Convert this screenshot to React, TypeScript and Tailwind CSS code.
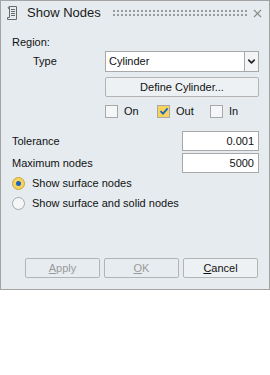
import { ChevronDown, X } from 'lucide-react';

function Check({ checked, label }: { checked?: boolean; label: string }) {
  return (
    <div className="flex items-center gap-[6px]">
      <div
        className={
          'w-[13px] h-[13px] border flex items-center justify-center ' +
          (checked ? 'border-[#a8a8a8] bg-[#f6d45c]' : 'border-[#a8a8a8] bg-[#f4f6f8]')
        }
      >
        {checked && (
          <svg width="10" height="10" viewBox="0 0 10 10">
            <path d="M1.5 5.2 L4 7.6 L8.6 2.4" fill="none" stroke="#1d63c4" strokeWidth="1.8" />
          </svg>
        )}
      </div>
      <span>{label}</span>
    </div>
  );
}

function Radio({ checked, label }: { checked?: boolean; label: string }) {
  return (
    <div className="flex items-center gap-[7px] h-[20px]">
      <div
        className={
          'w-[13px] h-[13px] rounded-full border flex items-center justify-center ' +
          (checked ? 'border-[#c9a63a] bg-[#f6d45c]' : 'border-[#a8a8a8] bg-[#f4f6f8]')
        }
      >
        {checked && <div className="w-[5px] h-[5px] rounded-full bg-[#1d63c4]" />}
      </div>
      <span>{label}</span>
    </div>
  );
}

function Btn({ u, rest, disabled }: { u: string; rest: string; disabled?: boolean }) {
  return (
    <div
      className={
        'w-[75px] h-[20px] border border-[#b4b4b4] rounded-[2px] flex items-center justify-center ' +
        (disabled ? 'text-[#9a9a9a] bg-[#e6ecf0]' : 'text-[#111] bg-[#edf1f4]')
      }
    >
      <span>
        <span className="underline">{u}</span>
        {rest}
      </span>
    </div>
  );
}

export default function App() {
  return (
    <div className="w-[270px] h-[375px] bg-white" style={{ fontFamily: '"Liberation Sans", Arial, sans-serif' }}>
      <div className="w-[270px] h-[290px] bg-[#e5ebef] border border-[#a3a3a3] flex flex-col text-[11px] text-[#111]">
        {/* title bar */}
        <div className="flex items-center h-[24px] pl-[5px] pr-[5px]">
          <svg width="12" height="16" viewBox="0 0 12 16" className="shrink-0">
            <path
              d="M3.5 1.5 H10.5 V14.5 H1.5 V12.5 H3.5 Z M3.5 1.5 C1.8 1.5 1.8 4 3.5 4"
              fill="none"
              stroke="#6a6a6a"
              strokeWidth="1"
            />
            <path d="M5 4.5 H9 M5 6.5 H9 M5 8.5 H9 M5 10.5 H9" stroke="#6a6a6a" strokeWidth="1" />
          </svg>
          <span className="ml-[9px] text-[13px] text-[#1a1a1a]">Show Nodes</span>
          <div className="flex-1 ml-[11px] mr-[3px] h-[8px] bg-[radial-gradient(#9a9a9a_0.8px,transparent_1px)] bg-[length:4px_4px]" />
          <X size={13} strokeWidth={2} className="text-[#8a8a8a]" />
        </div>

        <div className="pl-[11px] pr-[10px] pt-[9px] flex flex-col">
          <div className="h-[16px] leading-[16px]">Region:</div>
          <div className="flex items-center mt-[1px]">
            <span className="w-[93px] pl-[21px]">Type</span>
            <div className="flex-1 h-[21px] flex border border-[#a8a8a8] bg-white">
              <span className="flex-1 pl-[3px] leading-[19px]">Cylinder</span>
              <div className="w-[14px] border-l border-[#a8a8a8] bg-[#f2f4f6] flex items-center justify-center">
                <ChevronDown size={11} strokeWidth={3.5} className="text-[#222]" />
              </div>
            </div>
          </div>
          <div className="ml-[93px] mt-[5px] h-[20px] border border-[#b4b4b4] rounded-[2px] bg-[#edf1f4] flex items-center justify-center">
            Define Cylinder...
          </div>
          <div className="ml-[93px] mt-[6px] h-[16px] flex items-center">
            <div className="w-[52px]"><Check label="On" /></div>
            <div className="w-[53px]"><Check checked label="Out" /></div>
            <Check label="In" />
          </div>

          <div className="flex items-center justify-between mt-[12px]">
            <span>Tolerance</span>
            <div className="w-[77px] h-[20px] border border-[#a8a8a8] bg-white text-right pr-[4px] leading-[18px]">0.001</div>
          </div>
          <div className="flex items-center justify-between mt-[2px]">
            <span>Maximum nodes</span>
            <div className="w-[77px] h-[20px] border border-[#a8a8a8] bg-white text-right pr-[4px] leading-[18px]">5000</div>
          </div>
          <Radio checked label="Show surface nodes" />
          <Radio label="Show surface and solid nodes" />
        </div>

        <div className="flex-1" />
        <div className="flex justify-end gap-[4px] pr-[11px] pb-[11px]">
          <Btn u="A" rest="pply" disabled />
          <Btn u="O" rest="K" disabled />
          <Btn u="C" rest="ancel" />
        </div>
      </div>
    </div>
  );
}
